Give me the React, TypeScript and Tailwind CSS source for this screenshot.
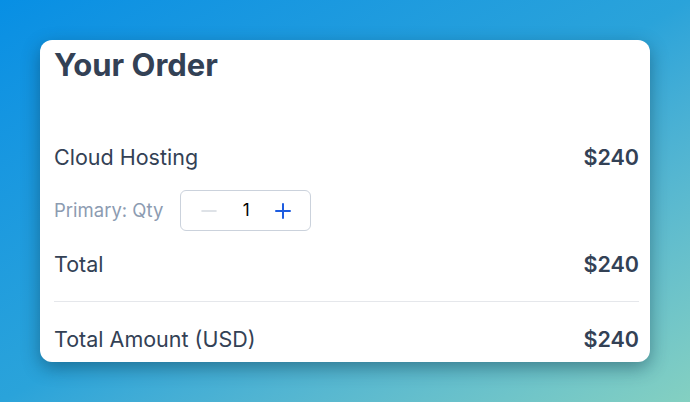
import React from "react";

const Row = ({ label, amount, className = "" }: { label: string; amount: string; className?: string }) => (
  <div className={`flex items-center justify-between h-[28px] text-[21.5px] ${className}`}>
    <span className="font-normal">{label}</span>
    <span className="font-semibold">{amount}</span>
  </div>
);

const App = () => {
  return (
    <div
      className="w-[690px] h-[402px] pt-[40px] pl-[40px] bg-linear-to-br from-[#078fe4] via-[#2aa3da] to-[#84d0c1]"
      style={{ fontFamily: "Inter, 'Noto Sans', sans-serif" }}
    >
      <div className="w-[610px] h-[322px] rounded-[12px] bg-white shadow-[0_6px_18px_rgba(10,50,70,0.45)] pl-[14px] pr-[11px] pt-[7px] text-[#334155]">
        <h1 className="text-[31px] leading-[36px] font-bold">Your Order</h1>
        <Row label="Cloud Hosting" amount="$240" className="mt-[60px]" />
        <div className="flex items-center mt-[19px]">
          <span className="text-[18.5px] text-[#8c9bb1]">Primary: Qty</span>
          <div className="ml-[17px] w-[131px] h-[41px] rounded-[6px] border border-[#cbd2dc] flex items-center">
            <button className="ml-[20px] w-[16px] h-[16px] flex items-center justify-center">
              <svg width="16" height="16" viewBox="0 0 16 16">
                <path d="M1 8h14" stroke="#d4d9e0" strokeWidth="1.6" strokeLinecap="round" />
              </svg>
            </button>
            <span className="ml-[24px] w-[10px] text-center text-[17px] text-black">1</span>
            <button className="ml-[24px] w-[16px] h-[16px] flex items-center justify-center">
              <svg width="16" height="16" viewBox="0 0 16 16">
                <path d="M1 8h14M8 1v14" stroke="#1d5ce0" strokeWidth="2" strokeLinecap="round" />
              </svg>
            </button>
          </div>
        </div>
        <Row label="Total" amount="$240" className="mt-[19px]" />
        <div className="mt-[23px] h-px bg-[#e5e7eb]" />
        <Row label="Total Amount (USD)" amount="$240" className="mt-[23px]" />
      </div>
    </div>
  );
};

export default App;
